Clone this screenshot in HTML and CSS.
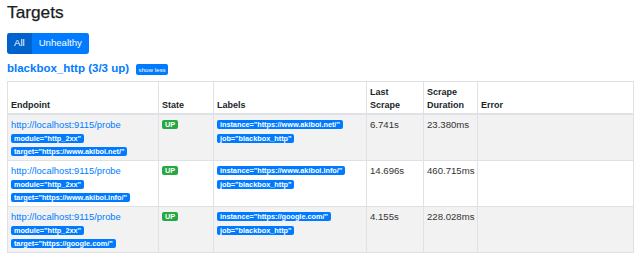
FILE: index.html
```html
<!DOCTYPE html>
<html>
<head>
<meta charset="utf-8">
<link rel="stylesheet" href="styles.css">
</head>
<body>
<div class="page">
  <h2 class="title">Targets</h2>
  <div class="btn-group">
    <button class="btn btn-active">All</button><button class="btn">Unhealthy</button>
  </div>
  <div class="pool-head">
    <a class="pool-name" href="#">blackbox_http (3/3 up)</a>
    <button class="btn-xs">show less</button>
  </div>
  <table class="targets">
    <colgroup>
      <col class="c-endpoint"><col class="c-state"><col class="c-labels"><col class="c-last"><col class="c-dur"><col class="c-error">
    </colgroup>
    <thead>
      <tr>
        <th>Endpoint</th>
        <th>State</th>
        <th>Labels</th>
        <th>Last Scrape</th>
        <th>Scrape Duration</th>
        <th>Error</th>
      </tr>
    </thead>
    <tbody>
      <tr class="striped">
        <td><div class="stack">
          <div class="line first"><a class="ep-link" href="#">http://localhost:9115/probe</a></div>
          <div class="line"><span class="badge">module="http_2xx"</span></div>
          <div class="line"><span class="badge">target="https://www.akiboi.net/"</span></div>
        </div></td>
        <td><div class="stack"><div class="line first"><span class="badge badge-up">UP</span></div></div></td>
        <td><div class="stack">
          <div class="line first"><span class="badge">instance="https://www.akiboi.net/"</span></div>
          <div class="line"><span class="badge">job="blackbox_http"</span></div>
        </div></td>
        <td><div class="line first">6.741s</div></td>
        <td><div class="line first">23.380ms</div></td>
        <td></td>
      </tr>
      <tr>
        <td><div class="stack">
          <div class="line first"><a class="ep-link" href="#">http://localhost:9115/probe</a></div>
          <div class="line"><span class="badge">module="http_2xx"</span></div>
          <div class="line"><span class="badge">target="https://www.akiboi.info/"</span></div>
        </div></td>
        <td><div class="stack"><div class="line first"><span class="badge badge-up">UP</span></div></div></td>
        <td><div class="stack">
          <div class="line first"><span class="badge">instance="https://www.akiboi.info/"</span></div>
          <div class="line"><span class="badge">job="blackbox_http"</span></div>
        </div></td>
        <td><div class="line first">14.696s</div></td>
        <td><div class="line first">460.715ms</div></td>
        <td></td>
      </tr>
      <tr class="striped">
        <td><div class="stack">
          <div class="line first"><a class="ep-link" href="#">http://localhost:9115/probe</a></div>
          <div class="line"><span class="badge">module="http_2xx"</span></div>
          <div class="line"><span class="badge">target="https://google.com/"</span></div>
        </div></td>
        <td><div class="stack"><div class="line first"><span class="badge badge-up">UP</span></div></div></td>
        <td><div class="stack">
          <div class="line first"><span class="badge">instance="https://google.com/"</span></div>
          <div class="line"><span class="badge">job="blackbox_http"</span></div>
        </div></td>
        <td><div class="line first">4.155s</div></td>
        <td><div class="line first">228.028ms</div></td>
        <td></td>
      </tr>
    </tbody>
  </table>
</div>
</body>
</html>
```

FILE: styles.css
```css
* { box-sizing: border-box; }
html, body {
  margin: 0;
  padding: 0;
  background: #fff;
}
body {
  font-family: "Liberation Sans", Arial, sans-serif;
  font-size: 9.6px;
  color: #212529;
}
.page {
  padding: 2px 7px 0 7px;
}
.title {
  margin: 0;
  font-size: 17.3px;
  line-height: 20.4px;
  font-weight: 500;
  color: #1a1d20;
  -webkit-text-stroke: 0.25px #1a1d20;
}
.btn-group {
  display: flex;
  margin-top: 10.6px;
}
.btn {
  font-family: inherit;
  font-size: 9.6px;
  line-height: 14.4px;
  height: 21px;
  padding: 3px 7px;
  border: none;
  background: #007bff;
  color: #fff;
  margin: 0;
}
.btn:first-child { border-radius: 2.4px 0 0 2.4px; }
.btn:last-child { border-radius: 0 2.4px 2.4px 0; }
.btn-active { background: #0062cc; }
.pool-head {
  display: flex;
  align-items: center;
  margin-top: 7px;
  height: 15px;
}
.pool-name {
  font-size: 11.5px;
  font-weight: 700;
  color: #007bff;
  text-decoration: none;
  line-height: 15px;
}
.btn-xs {
  margin-left: 7px;
  margin-top: 2px;
  height: 11px;
  padding: 0 2.5px;
  border: none;
  border-radius: 2px;
  background: #007bff;
  color: #fff;
  font-family: inherit;
  font-size: 6.2px;
  line-height: 11px;
}
.targets {
  margin-top: 5px;
  width: 626px;
  border-collapse: collapse;
  table-layout: fixed;
}
.c-endpoint { width: 151px; }
.c-state { width: 55px; }
.c-labels { width: 153px; }
.c-last { width: 57px; }
.c-dur { width: 54px; }
.c-error { width: 156px; }
.targets th, .targets td {
  border: 1px solid #dee2e6;
  text-align: left;
}
.targets th {
  font-size: 9px;
  font-weight: 700;
  line-height: 13px;
  padding: 2px 3px 1px;
  vertical-align: bottom;
  border-bottom-width: 2px;
  height: 32px;
}
.targets td {
  vertical-align: top;
  padding: 2.5px 3px 1.5px;
  color: #333;
}
.striped td { background: #f2f2f2; }
.stack {
  display: flex;
  flex-direction: column;
  align-items: flex-start;
}
.line {
  display: flex;
  align-items: center;
  height: 13px;
  white-space: nowrap;
}
.line.first { height: 15px; }
.ep-link {
  color: #007bff;
  text-decoration: none;
  font-size: 9.4px;
}
.badge {
  display: inline-block;
  font-size: 7.3px;
  font-weight: 700;
  line-height: 1;
  padding: 1.2px 2.9px;
  border-radius: 2px;
  background: #007bff;
  color: #fff;
  white-space: nowrap;
}
.badge-up { background: #28a745; }
```
